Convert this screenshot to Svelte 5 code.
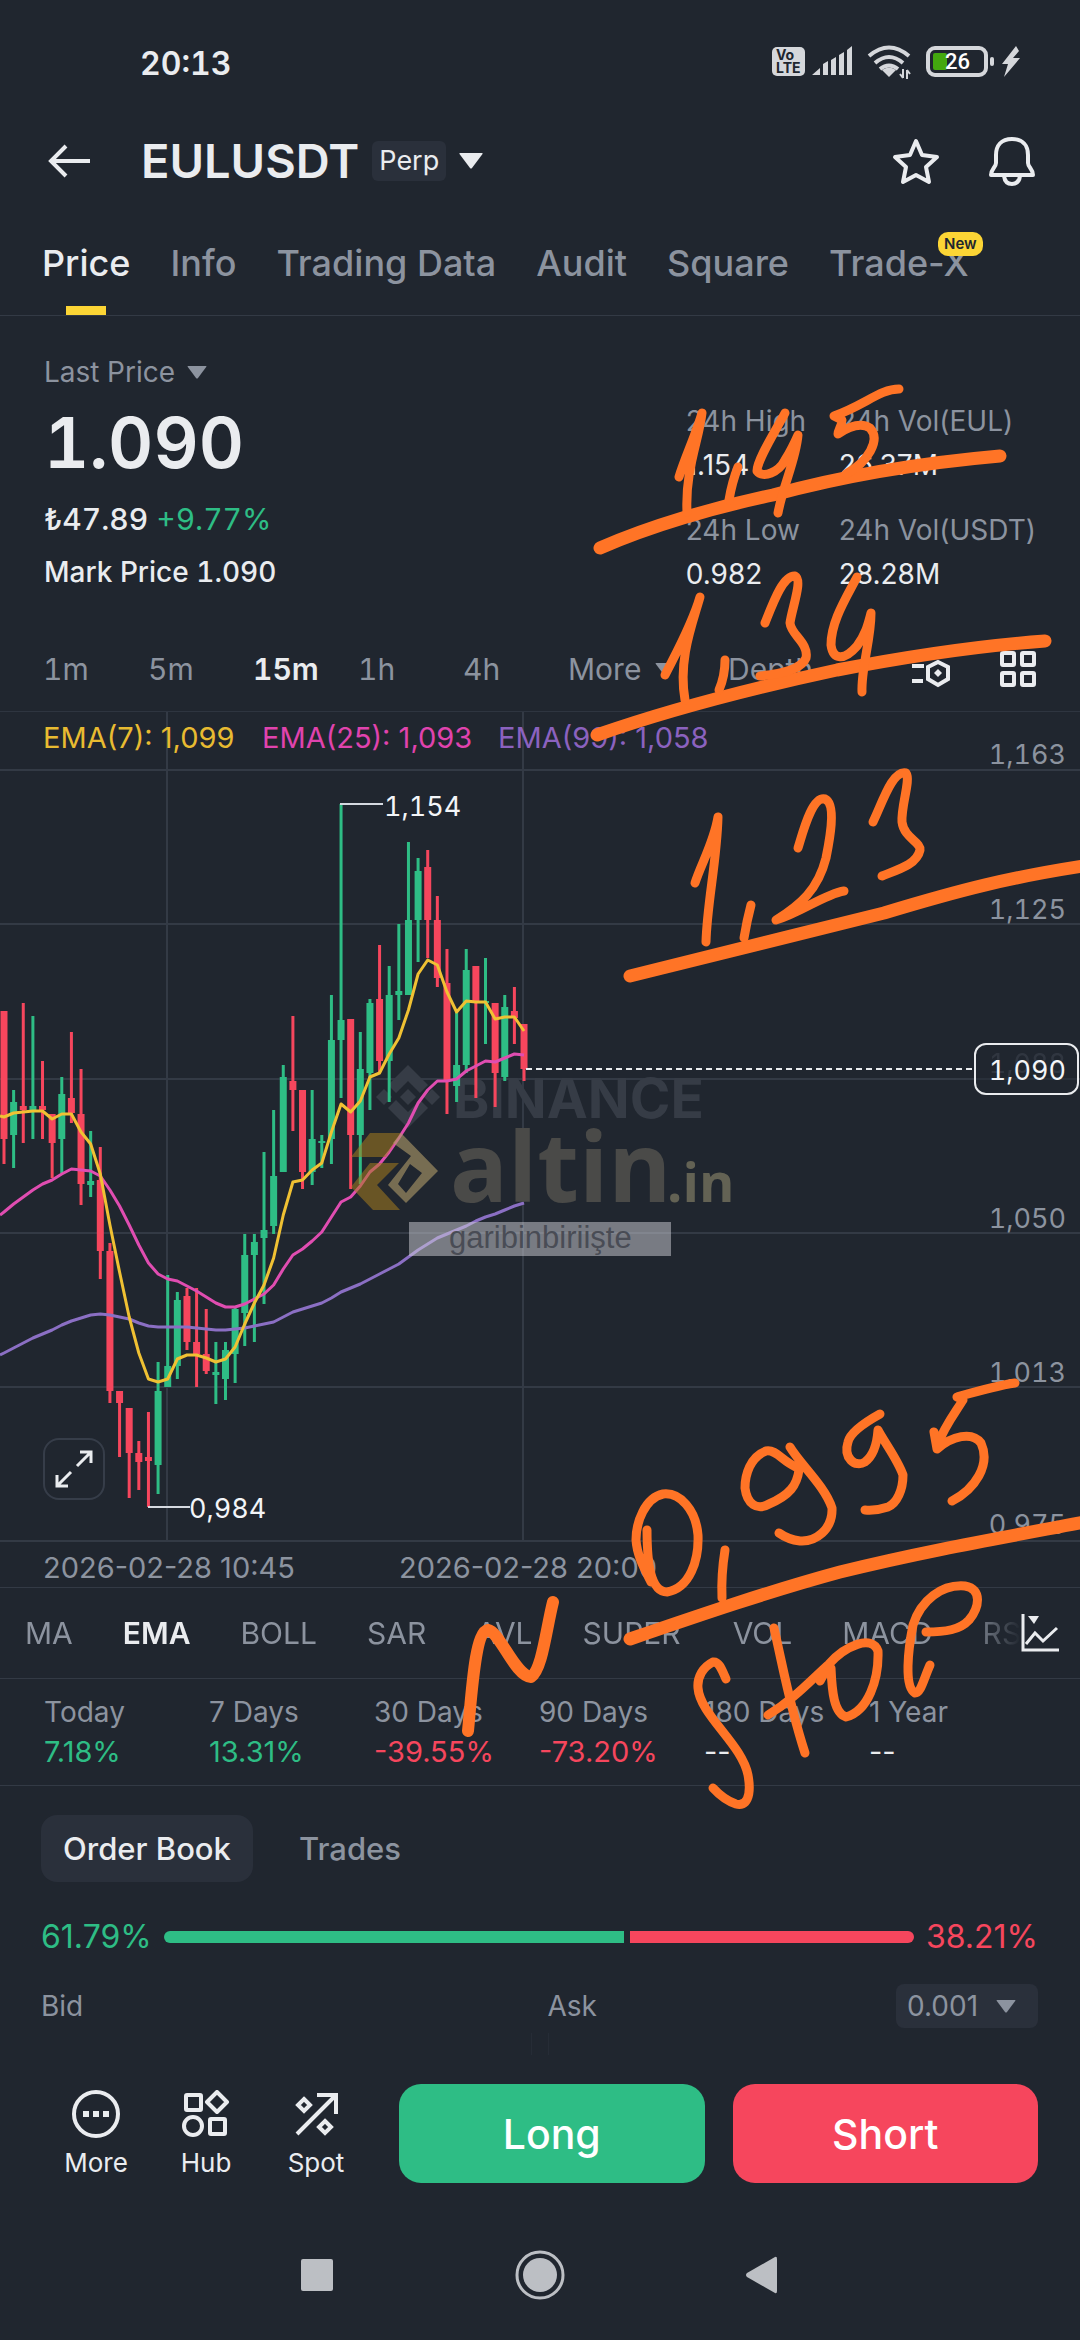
<script lang="ts">
	const tabs = ['Price', 'Info', 'Trading Data', 'Audit', 'Square', 'Trade-X'];
	const intervals = ['1m', '5m', '15m', '1h', '4h'];
	const overlays = ['MA', 'EMA', 'BOLL', 'SAR', 'AVL', 'SUPER'];
	const oscillators = ['VOL', 'MACD', 'RSI'];

	const stats = [
		{ label: '24h High', value: '1.154' },
		{ label: '24h Vol(EUL)', value: '26.37M' },
		{ label: '24h Low', value: '0.982' },
		{ label: '24h Vol(USDT)', value: '28.28M' }
	];

	const performance = [
		{ label: 'Today', value: '7.18%', tone: 'up' },
		{ label: '7 Days', value: '13.31%', tone: 'up' },
		{ label: '30 Days', value: '-39.55%', tone: 'down' },
		{ label: '90 Days', value: '-73.20%', tone: 'down' },
		{ label: '180 Days', value: '--', tone: '' },
		{ label: '1 Year', value: '--', tone: '' }
	];

	let activeTab = $state('Price');
	let activeInterval = $state('15m');
	let activeIndicator = $state('EMA');
	let activeBook = $state('Order Book');

	const bid = 61.79;
	const ask = 38.21;

	// chart geometry, in viewBox units
	const START = 4;
	const STEP = 9.63;
	const x = (i: number) => START + i * STEP;

	const rows = [770, 924, 1079, 1233, 1387, 1541];
	const axis = [
		{ y: 764, text: '1,163' },
		{ y: 919, text: '1,125' },
		{ y: 1228, text: '1,050' },
		{ y: 1382, text: '1,013' },
		{ y: 1534, text: '0,975' }
	];

	// [up, high, body top, body bottom, low]
	const candles = [
		[0, 1011, 1011, 1139, 1164], [1, 1090, 1102, 1135, 1168], [0, 1003, 1106, 1110, 1143],
		[1, 1016, 1106, 1112, 1139], [0, 1061, 1106, 1110, 1139], [0, 1114, 1114, 1143, 1178],
		[1, 1077, 1094, 1139, 1173], [0, 1032, 1098, 1113, 1123], [0, 1069, 1114, 1184, 1205],
		[1, 1131, 1181, 1185, 1197], [0, 1147, 1180, 1251, 1279], [0, 1243, 1251, 1391, 1403],
		[0, 1391, 1391, 1403, 1457], [0, 1408, 1408, 1453, 1498], [0, 1441, 1453, 1462, 1490],
		[0, 1412, 1457, 1461, 1507], [1, 1362, 1391, 1465, 1494], [1, 1275, 1366, 1387, 1387],
		[1, 1292, 1300, 1366, 1379], [0, 1288, 1296, 1342, 1350], [0, 1288, 1342, 1354, 1387],
		[0, 1309, 1354, 1371, 1374], [1, 1342, 1372, 1375, 1404], [1, 1342, 1350, 1379, 1400],
		[1, 1307, 1309, 1354, 1383], [1, 1234, 1255, 1313, 1346], [1, 1234, 1242, 1255, 1342],
		[1, 1152, 1230, 1238, 1304], [1, 1110, 1176, 1226, 1234], [1, 1065, 1077, 1172, 1172],
		[0, 1016, 1081, 1090, 1131], [0, 1090, 1090, 1172, 1189], [1, 1090, 1139, 1172, 1185],
		[1, 1135, 1141, 1143, 1168], [1, 995, 1040, 1139, 1164], [1, 804, 1020, 1040, 1098],
		[0, 1019, 1019, 1135, 1189], [1, 1032, 1069, 1135, 1184], [1, 999, 1003, 1073, 1110],
		[0, 945, 999, 1061, 1073], [1, 966, 995, 1061, 1102], [1, 924, 991, 995, 1020],
		[1, 842, 920, 995, 995], [1, 858, 871, 920, 962], [0, 850, 867, 920, 958],
		[0, 896, 920, 978, 987], [0, 949, 983, 1081, 1114], [1, 1011, 1065, 1086, 1102],
		[1, 949, 970, 1065, 1073], [0, 966, 966, 1003, 1098], [1, 958, 1001, 1003, 1044],
		[0, 1003, 1003, 1073, 1107], [1, 995, 1007, 1077, 1081], [0, 987, 1011, 1018, 1044],
		[0, 1024, 1024, 1069, 1081]
	];

	const ema7 = [
		1117, 1113, 1112, 1111, 1111, 1119, 1114, 1114, 1132, 1144, 1174, 1225, 1272, 1317, 1353, 1379,
		1382, 1379, 1359, 1355, 1355, 1358, 1362, 1359, 1347, 1324, 1303, 1285, 1258, 1215, 1182, 1180,
		1170, 1163, 1132, 1104, 1112, 1101, 1077, 1073, 1054, 1038, 1010, 974, 960, 965, 992, 1012,
		1001, 1002, 1002, 1019, 1017, 1017, 1031
	];
	const ema25 = [
		1212, 1204, 1197, 1190, 1184, 1180, 1174, 1169, 1170, 1171, 1176, 1190, 1206, 1225, 1245, 1263,
		1274, 1279, 1281, 1286, 1291, 1297, 1303, 1307, 1307, 1304, 1299, 1294, 1285, 1269, 1255, 1249,
		1241, 1232, 1217, 1202, 1197, 1186, 1172, 1164, 1152, 1138, 1123, 1103, 1090, 1081, 1081, 1079,
		1071, 1066, 1061, 1062, 1058, 1054, 1055
	];
	const ema99 = [
		1353, 1348, 1343, 1338, 1334, 1330, 1325, 1321, 1318, 1315, 1314, 1315, 1317, 1319, 1323, 1326,
		1327, 1327, 1327, 1327, 1328, 1329, 1330, 1330, 1329, 1328, 1326, 1324, 1322, 1317, 1312, 1309,
		1306, 1303, 1298, 1292, 1288, 1284, 1279, 1274, 1269, 1264, 1257, 1250, 1244, 1238, 1234, 1230,
		1226, 1221, 1217, 1214, 1210, 1206, 1203
	];

	const line = (values: number[], start: number) =>
		`0,${start} ` + values.map((y, i) => `${x(i)},${y}`).join(' ');
</script>

{#snippet caret(size: string)}
	<svg class="caret {size}" viewBox="0 0 24 16" aria-hidden="true">
		<path d="M1 0h22q1 0 .5 1L13 15q-1 1-2 0L.5 1Q0 0 1 0z" fill="currentColor" />
	</svg>
{/snippet}

<div class="screen">
	<div class="status-bar">
		<span class="clock">20:13</span>
		<svg class="status-icons" viewBox="0 0 250 36" aria-hidden="true">
			<rect x="0" y="2" width="33" height="29" rx="5" fill="#d5d7db" />
			<text x="4" y="15" class="volte">Vo</text>
			<text x="4" y="28" class="volte">LTE</text>
			<g fill="#d5d7db">
				<path d="M40 30l8-7v7zM51 19l5-3v14h-5zM59 15l5-3v18h-5zM67 10l5-3v23h-5zM75 5l5-4v29h-5z" />
				<path d="M110 25q7-5 14 0l-7 7z" />
			</g>
			<g fill="none" stroke="#d5d7db" stroke-width="4">
				<path d="M97 11q20-17 40 0" />
				<path d="M103 18q14-12 28 0" />
				<path d="M108 24q9-7 18 0" />
			</g>
			<path d="M131 24v9M131 33l-3-4M135 34v-9M135 25l3 4" stroke="#d5d7db" stroke-width="2" fill="none" />
			<rect x="156" y="3" width="58" height="27" rx="7" fill="none" stroke="#d5d7db" stroke-width="4" />
			<rect x="161" y="8" width="14" height="17" rx="2" fill="#43a80f" />
			<text x="173" y="24" class="charge">26</text>
			<rect x="218" y="12" width="4" height="9" rx="2" fill="#d5d7db" />
			<path d="M244 1l-14 18h6l-4 13 16-19h-7l6-7z" fill="#d5d7db" />
		</svg>
	</div>

	<header class="title-bar">
		<button class="icon-button" aria-label="Back">
			<svg width="44" height="36" viewBox="0 0 44 36" fill="none" stroke="currentColor" stroke-width="4">
				<path d="M19 3L4 18l15 15M4 18h39" />
			</svg>
		</button>
		<button class="pair">
			<h1>EULUSDT</h1>
			<span class="perp">Perp</span>
			{@render caret('large')}
		</button>
		<button class="icon-button star" aria-label="Add to favorites">
			<svg width="48" height="48" viewBox="0 0 48 48" fill="none" stroke="currentColor" stroke-width="4" stroke-linejoin="round">
				<path d="M24 4l6 14 15 2-11 10 3 15-13-7-13 7 3-15L3 20l15-2z" />
			</svg>
		</button>
		<button class="icon-button" aria-label="Price alerts">
			<svg width="48" height="50" viewBox="0 0 48 50" fill="none" stroke="currentColor" stroke-width="4" stroke-linejoin="round">
				<path d="M24 3C13 3 8 10 8 19v8c0 4-5 6-5 12h42c0-6-5-8-5-12v-8C40 10 35 3 24 3z" />
				<path d="M16 40q1 8 8 8t8-8" />
			</svg>
		</button>
	</header>

	<nav class="tabs">
		{#each tabs as tab}
			<button class:active={activeTab === tab} onclick={() => (activeTab = tab)}>
				{tab}
				{#if tab === 'Trade-X'}
					<span class="new-badge">New</span>
				{/if}
			</button>
		{/each}
	</nav>

	<section class="summary">
		<div class="price-block">
			<button class="last-price">Last Price {@render caret('small')}</button>
			<strong>1.090</strong>
			<div class="fiat">₺47.89 <span class="up">+9.77%</span></div>
			<div class="mark">Mark Price <span>1.090</span></div>
		</div>
		<dl class="stats">
			{#each stats as stat}
				<div>
					<dt>{stat.label}</dt>
					<dd>{stat.value}</dd>
				</div>
			{/each}
		</dl>
	</section>

	<div class="intervals">
		{#each intervals as interval}
			<button class:active={activeInterval === interval} onclick={() => (activeInterval = interval)}>
				{interval}
			</button>
		{/each}
		<button class="more">More {@render caret('small')}</button>
		<button class="depth">Depth</button>
		<button class="icon-button" aria-label="Chart settings">
			<svg width="40" height="38" viewBox="0 0 40 38" fill="none" stroke="currentColor" stroke-width="4">
				<path d="M1 16h12M1 31h11" />
				<path d="M27 12l10 5v12l-10 6-10-6V17z" />
				<path d="M27 19l4 4-4 4-4-4z" fill="currentColor" stroke="none" />
			</svg>
		</button>
		<button class="icon-button layout" aria-label="Chart layout">
			<svg width="38" height="38" viewBox="0 0 38 38" fill="none" stroke="currentColor" stroke-width="4">
				<rect x="3" y="3" width="12" height="12" rx="1" />
				<rect x="23" y="3" width="12" height="12" rx="1" />
				<rect x="3" y="23" width="12" height="12" rx="1" />
				<rect x="23" y="23" width="12" height="12" rx="1" />
			</svg>
		</button>
	</div>

	<section class="chart">
		<svg viewBox="0 712 1080 875" role="img" aria-label="EULUSDT 15 minute candles">
			<g class="grid">
				{#each rows as y}
					<line x1="0" x2="1080" y1={y} y2={y} />
				{/each}
				<line x1="167" x2="167" y1="712" y2="1541" />
				<line x1="523" x2="523" y1="712" y2="1541" />
			</g>

			<g class="brand">
				<path d="M408 1065l20 20-8 8-12-12-12 12-8-8zM408 1128l20-20-8-8-12 12-12-12-8 8zM384 1089l8 8-8 8-8-8zM408 1089l8 8-8 8-8-8zM432 1089l8 8-8 8-8-8z" />
				<text x="453" y="1118">BINANCE</text>
			</g>

			{#each candles as [up, high, top, bottom, low], i}
				<g class={up ? 'candle-up' : 'candle-down'}>
					<rect x={x(i) - 1.5} y={high} width="3" height={low - high} />
					<rect x={x(i) - 3.5} y={top} width="7" height={bottom - top} />
				</g>
			{/each}

			<polyline class="ema ema99" points={line(ema99, 1355)} />
			<polyline class="ema ema25" points={line(ema25, 1215)} />
			<polyline class="ema ema7" points={line(ema7, 1116)} />

			<text x="43" y="748" class="legend ema7-text">EMA(7): 1,099</text>
			<text x="262" y="748" class="legend ema25-text">EMA(25): 1,093</text>
			<text x="498" y="748" class="legend ema99-text">EMA(99): 1,058</text>

			<path class="leader" d="M340 804h43M148 1507h42" />
			<text x="384" y="816" class="label bright">1,154</text>
			<text x="189" y="1518" class="label bright">0,984</text>

			{#each axis as tick}
				<text x="1066" y={tick.y} class="label muted" text-anchor="end">{tick.text}</text>
			{/each}

			<line class="last-line" x1="526" x2="975" y1="1069" y2="1069" />
			<text x="1066" y="1073" class="label muted faint" text-anchor="end">1,088</text>
			<rect class="last-box" x="975" y="1044" width="103" height="50" rx="11" />
			<text x="1066" y="1080" class="label bright" text-anchor="end">1,090</text>

			<text x="43" y="1578" class="legend muted">2026-02-28 10:45</text>
			<text x="399" y="1578" class="legend muted">2026-02-28 20:00</text>

			<g class="stamp">
				<path d="M370 1133h31l-15 24h-35zM370 1163h29l-22 22 23 25h-27l-22-23z" fill="#a67c1e" opacity=".55" />
				<path d="M401 1133l37 38-32 32-18-18 23-29-18-13zM410 1164l-12 20 8 9 16-20z" fill="#b39c6a" fill-rule="evenodd" opacity=".6" />
				<text x="450" y="1202" class="stamp-name">altin</text>
				<text x="667" y="1202" class="stamp-tld">.in</text>
				<rect x="409" y="1222" width="262" height="34" fill="#d0d0d8" opacity=".5" />
				<text x="449" y="1248" class="stamp-user">garibinbiriişte</text>
			</g>
		</svg>
		<button class="expand" aria-label="Full screen">
			<svg width="38" height="38" viewBox="0 0 38 38" fill="none" stroke="currentColor" stroke-width="3">
				<path d="M22 16L35 3M25 2h11v11M16 22L3 35M2 25v11h11" />
			</svg>
		</button>
	</section>

	<div class="indicators">
		<div class="indicator-list">
			{#each overlays as name}
				<button class:active={activeIndicator === name} onclick={() => (activeIndicator = name)}>{name}</button>
			{/each}
			<span class="divider"></span>
			{#each oscillators as name}
				<button class:active={activeIndicator === name} onclick={() => (activeIndicator = name)}>{name}</button>
			{/each}
		</div>
		<button class="icon-button" aria-label="Indicator settings">
			<svg width="38" height="38" viewBox="0 0 38 38" fill="none" stroke="currentColor" stroke-width="3">
				<path d="M2 0v36h36" />
				<path d="M5 30l9-11 8 8 14-13" />
				<path d="M7 2h11l-5 8z" fill="currentColor" stroke="none" />
			</svg>
		</button>
	</div>

	<dl class="performance">
		{#each performance as item}
			<div>
				<dt>{item.label}</dt>
				<dd class={item.tone}>{item.value}</dd>
			</div>
		{/each}
	</dl>

	<section class="book">
		<div class="book-tabs">
			{#each ['Order Book', 'Trades'] as name}
				<button class:active={activeBook === name} onclick={() => (activeBook = name)}>{name}</button>
			{/each}
		</div>
		<div class="ratio">
			<span class="up">{bid}%</span>
			<div class="ratio-bar">
				<div class="ratio-bid" style="flex-grow: {bid}"></div>
				<div class="ratio-ask" style="flex-grow: {ask}"></div>
			</div>
			<span class="down">{ask}%</span>
		</div>
		<div class="book-head">
			<span>Bid</span>
			<div class="ask-head">
				<span>Ask</span>
				<div class="precision">
					<select aria-label="Price precision">
						<option>0.001</option>
						<option>0.01</option>
					</select>
					{@render caret('small')}
				</div>
			</div>
		</div>
		<div class="book-peek"></div>
	</section>

	<footer class="actions">
		<div class="shortcuts">
			<button>
				<svg width="48" height="48" viewBox="0 0 48 48" fill="none" stroke="currentColor" stroke-width="4">
					<circle cx="24" cy="24" r="22" />
					<path d="M11 24h6M21 24h6M31 24h6" stroke-width="6" />
				</svg>
				More
			</button>
			<button>
				<svg width="48" height="48" viewBox="0 0 48 48" fill="none" stroke="currentColor" stroke-width="4" stroke-linejoin="round">
					<rect x="4" y="5" width="15" height="15" rx="1" />
					<path d="M35 2l10 10-10 10-10-10z" />
					<circle cx="11" cy="36" r="9" />
					<rect x="28" y="29" width="15" height="15" rx="1" />
				</svg>
				Hub
			</button>
			<button>
				<svg width="48" height="48" viewBox="0 0 48 48" fill="none" stroke="currentColor" stroke-width="4">
					<path d="M5 44L43 6M25 5h19v19" />
					<path d="M12 9l6 6-6 6-6-6zM33 31l6 6-6 6-6-6z" />
				</svg>
				Spot
			</button>
		</div>
		<button class="trade long">Long</button>
		<button class="trade short">Short</button>
	</footer>

	<nav class="system-nav">
		<button aria-label="Recent apps">
			<svg width="48" height="48" viewBox="0 0 48 48"><rect x="8" y="8" width="32" height="32" rx="2" fill="#bcbfc4" /></svg>
		</button>
		<button aria-label="Home">
			<svg width="50" height="50" viewBox="0 0 50 50">
				<circle cx="25" cy="25" r="23" fill="none" stroke="#bcbfc4" stroke-width="3" />
				<circle cx="25" cy="25" r="17" fill="#bcbfc4" />
			</svg>
		</button>
		<button aria-label="Go back">
			<svg width="48" height="48" viewBox="0 0 48 48"><path d="M8 22L36 6q2-1 2 2v32q0 3-2 2L8 26q-2-2 0-4z" fill="#bcbfc4" /></svg>
		</button>
	</nav>

	<!-- hand-drawn price targets -->
	<svg class="markup" viewBox="0 0 1080 2340" aria-hidden="true">
		<g class="level">
			<path d="M600 548C650 526 715 507 773 495C850 474 920 463 1000 456" />
			<path d="M597 735C660 713 730 693 837 670C910 656 975 646 1045 641" />
			<path d="M630 976C700 958 800 934 884 913C960 890 1010 877 1090 865" />
			<path d="M630 1639C700 1615 770 1591 840 1572C920 1552 1000 1538 1090 1521" />
		</g>
		<g class="digits">
			<path d="M679 477C684 460 696 434 702 413C699 440 685 470 687 512" />
			<path d="M738 467Q732 482 729 500" />
			<path d="M785 413C775 432 757 460 757 471C763 479 779 472 785 460C790 452 794 444 798 435C796 460 783 485 778 513" />
			<path d="M899 389C880 389 865 405 834 416L842 420C842 426 838 430 838 434C850 426 862 423 870 428C881 440 868 462 846 474" />
			<path d="M665 675C675 655 692 625 700 597C692 625 678 660 685 700" />
			<path d="M725 660Q725 676 719 690" />
			<path d="M765 623C773 603 783 575 795 576C803 580 792 608 790 623C791 635 809 643 806 658C802 668 784 674 760 676" />
			<path d="M857 577C845 600 831 622 831 645C833 660 844 661 857 646C866 634 868 624 871 613C871 640 861 668 862 692" />
			<path d="M695 883C701 864 714 842 718 817C717 860 707 904 706 942" />
			<path d="M751 905Q747 920 744 938" />
			<path d="M798 848C803 832 812 796 825 799C837 804 829 843 826 858C818 890 800 905 776 920C800 913 825 894 844 891" />
			<path d="M873 822C882 804 892 770 906 773C911 780 901 805 902 822C904 838 921 842 920 850C917 864 900 869 882 876" />
			<path d="M647 1530C647 1560 650 1592 667 1592C690 1588 699 1560 698 1535C696 1510 680 1492 663 1494C645 1498 636 1522 636 1540C637 1556 645 1570 651 1582" />
			<path d="M725 1550Q721 1575 722 1598" />
			<path d="M796 1467C782 1461 776 1449 766 1451C750 1457 745 1475 745 1488C747 1504 757 1511 769 1504C790 1495 797 1485 799 1470M790 1447C800 1464 825 1486 832 1508C833 1530 815 1542 800 1541C792 1540 786 1538 779 1533" />
			<path d="M880 1414C862 1424 850 1433 848 1442C843 1458 855 1468 865 1462C873 1456 877 1444 878 1430C883 1440 898 1460 903 1475C903 1490 897 1503 888 1507Q876 1511 865 1510" />
			<path d="M1015 1383C995 1386 978 1391 957 1397L963 1400C955 1413 945 1425 937 1446L934 1432L937 1449C952 1436 972 1431 981 1443C991 1465 975 1489 952 1501" />
			<path d="M726 1679C722 1670 719 1661 713 1662C703 1667 697 1677 698 1688C700 1715 742 1744 748 1775C752 1797 746 1807 736 1804Q724 1800 713 1788" />
			<path d="M774 1628C784 1672 790 1707 805 1753" />
			<path d="M768 1715C794 1699 810 1681 829 1664C845 1646 872 1634 878 1651C879 1680 868 1711 846 1717C834 1713 832 1692 831 1668M827 1668L820 1681" />
			<path d="M930 1665C924 1678 921 1693 915 1693C904 1687 908 1650 913 1625C921 1600 942 1584 965 1586C983 1589 979 1608 969 1620C960 1630 945 1632 926 1632" />
		</g>
		<path class="note" d="M468 1731C472 1690 475 1632 488 1630C500 1632 515 1676 531 1677C542 1670 546 1630 553 1602" />
	</svg>
</div>

<style>
	:global(body) {
		background: #20262f;
	}

	.screen {
		position: relative;
		overflow: hidden;
		background: #20262f;
		color: #eaecef;
		font-family: Inter, 'Liberation Sans', sans-serif;
		font-size: 28px;
	}

	button,
	select {
		margin: 0;
		padding: 0;
		border: 0;
		background: none;
		color: inherit;
		font: inherit;
		white-space: nowrap;
	}

	svg {
		display: block;
	}

	dl,
	dd,
	h1 {
		margin: 0;
	}

	.clock,
	.price-block,
	.intervals button,
	.label {
		font-variant-numeric: tabular-nums;
	}

	.up {
		color: #2ebd85;
	}

	.down {
		color: #f6465d;
	}

	.caret {
		flex: none;
	}

	.caret.large {
		width: 24px;
		height: 16px;
	}

	.caret.small {
		width: 20px;
		height: 13px;
	}

	.icon-button {
		flex: none;
	}

	.status-bar {
		display: flex;
		align-items: center;
		justify-content: space-between;
		height: 126px;
		padding: 0 58px 0 140px;
	}

	.clock {
		font-size: 32px;
		font-weight: 600;
	}

	.status-icons {
		width: 250px;
		height: 36px;
	}

	.volte {
		font-size: 14px;
		font-weight: 700;
		fill: #20262f;
	}

	.charge {
		font-family: Roboto, sans-serif;
		font-size: 22px;
		font-weight: 500;
		fill: #fff;
	}

	.title-bar {
		display: flex;
		align-items: center;
		height: 70px;
		padding: 0 44px 0 47px;
	}

	.pair {
		display: flex;
		align-items: center;
		gap: 13px;
		margin-left: 50px;
	}

	h1 {
		font-size: 47px;
		font-weight: 600;
		line-height: 56px;
	}

	.perp {
		padding: 0 7px;
		border-radius: 6px;
		background: #2a303b;
		font-size: 27px;
		line-height: 40px;
	}

	.star {
		margin: 0 48px 0 auto;
	}

	.tabs {
		display: flex;
		gap: 40px;
		height: 119px;
		padding: 0 42px;
		border-bottom: 1px solid #333a45;
		color: #8c939f;
	}

	.tabs button {
		position: relative;
		padding-bottom: 30px;
		padding-top: 45px;
		font-size: 36px;
		font-weight: 500;
		line-height: 44px;
	}

	.tabs .active {
		color: #eaecef;
	}

	.tabs .active::after {
		content: '';
		position: absolute;
		bottom: 0;
		left: 50%;
		width: 40px;
		height: 9px;
		margin-left: -20px;
		background: #fcd535;
	}

	.new-badge {
		position: absolute;
		top: 36px;
		right: -14px;
		padding: 0 6px;
		border-radius: 10px;
		background: #fcd535;
		color: #20262f;
		font-size: 15px;
		font-weight: 600;
		line-height: 24px;
	}

	.summary {
		display: flex;
		align-items: flex-end;
		justify-content: space-between;
		padding: 40px 44px 31px;
	}

	.last-price {
		display: flex;
		align-items: center;
		gap: 12px;
		color: #8c939f;
		line-height: 32px;
	}

	.price-block strong {
		display: block;
		font-size: 70px;
		font-weight: 600;
		line-height: 110px;
	}

	.fiat {
		font-size: 30px;
		font-weight: 500;
		line-height: 42px;
	}

	.fiat .up {
		font-weight: 400;
	}

	.mark {
		margin-top: 8px;
		font-weight: 500;
		line-height: 48px;
	}

	.stats {
		display: grid;
		grid-template-columns: 153px auto;
		row-gap: 21px;
		line-height: 44px;
		white-space: nowrap;
	}

	dt {
		color: #8c939f;
	}

	.intervals {
		display: flex;
		align-items: center;
		height: 84px;
		padding: 0 43px;
		border-bottom: 1px solid #2e3540;
		color: #8c939f;
		font-size: 30px;
	}

	.intervals > button:not(.icon-button) {
		width: 105px;
		text-align: left;
	}

	.intervals > .more:not(.icon-button) {
		display: flex;
		align-items: center;
		gap: 14px;
		width: 160px;
	}

	.intervals .active {
		color: #eaecef;
		font-weight: 600;
	}

	.intervals .icon-button {
		margin-left: auto;
		color: #eaecef;
	}

	.intervals .layout {
		margin-left: 48px;
	}

	.chart {
		position: relative;
		border-bottom: 1px solid #333a45;
	}

	.chart > svg {
		width: 100%;
		height: auto;
	}

	.grid line {
		stroke: #333a45;
		stroke-width: 2;
	}

	.brand {
		fill: #363c46;
	}

	.brand text {
		font-size: 55px;
		font-weight: 700;
	}

	.candle-up {
		fill: #2ebd85;
	}

	.candle-down {
		fill: #f6465d;
	}

	.ema {
		fill: none;
		stroke-width: 3;
		stroke-linejoin: round;
	}

	.ema7 {
		stroke: #f0c133;
	}

	.ema25 {
		stroke: #e04db1;
	}

	.ema99 {
		stroke: #8b6fc4;
	}

	.label {
		font-size: 27px;
	}

	.legend {
		font-size: 29px;
	}

	.ema7-text {
		fill: #e8bb31;
	}

	.ema25-text {
		fill: #e043ae;
	}

	.ema99-text {
		fill: #8b62bf;
	}

	.muted {
		fill: #8c939f;
	}

	.bright {
		fill: #f3f5f8;
	}

	.faint {
		opacity: 0.3;
	}

	.leader {
		fill: none;
		stroke: #d5d9e0;
		stroke-width: 2;
	}

	.last-line {
		stroke: #eaecef;
		stroke-width: 2;
		stroke-dasharray: 6 4;
	}

	.last-box {
		fill: #20262f;
		fill-opacity: 0.5;
		stroke: #eaecef;
		stroke-width: 2;
	}

	.stamp-name,
	.stamp-tld {
		font-family: 'Open Sans', 'Noto Sans', sans-serif;
		font-weight: 700;
	}

	.stamp-name {
		font-size: 96px;
		fill: #4a4a48;
	}

	.stamp-tld {
		font-size: 54px;
		fill: #636254;
	}

	.stamp-user {
		font-family: 'Liberation Sans', sans-serif;
		font-size: 31px;
		fill: #494c55;
	}

	.expand {
		position: absolute;
		bottom: 87px;
		left: 43px;
		display: grid;
		place-items: center;
		width: 62px;
		height: 62px;
		border: 2px solid #363d49;
		border-radius: 16px;
		background: #20262f;
	}

	.indicators {
		display: flex;
		align-items: center;
		height: 90px;
		padding-right: 21px;
		border-bottom: 1px solid #333a45;
	}

	.indicator-list {
		display: flex;
		flex: 1;
		gap: 50px;
		min-width: 0;
		overflow: hidden;
		padding-left: 25px;
		color: #8c939f;
		font-size: 30px;
		mask-image: linear-gradient(to right, #000 95%, transparent 100%);
	}

	.indicator-list .active {
		color: #eaecef;
		font-weight: 600;
	}

	.divider {
		width: 1px;
		margin: 6px -24px;
		background: #333a45;
	}

	.performance {
		display: grid;
		grid-template-columns: repeat(6, 1fr);
		padding: 13px 46px 13px 44px;
		border-bottom: 1px solid #333a45;
		line-height: 40px;
	}

	.performance dd {
		font-size: 29px;
	}

	.book {
		padding: 29px 42px 0 41px;
	}

	.book-tabs {
		display: flex;
		gap: 24px;
		font-size: 31px;
	}

	.book-tabs button {
		padding: 0 22px;
		border-radius: 16px;
		color: #8c939f;
		font-weight: 500;
		line-height: 67px;
	}

	.book-tabs .active {
		background: #2a303b;
		color: #eaecef;
	}

	.ratio {
		display: flex;
		align-items: center;
		gap: 12px;
		margin-top: 37px;
		font-size: 32px;
		line-height: 36px;
	}

	.ratio-bar {
		display: flex;
		flex: 1;
		gap: 6px;
		height: 12px;
	}

	.ratio-bid {
		border-radius: 6px 0 0 6px;
		background: #2ebd85;
	}

	.ratio-ask {
		border-radius: 0 6px 6px 0;
		background: #f6465d;
	}

	.book-head {
		display: grid;
		grid-template-columns: 1fr 1fr;
		gap: 16px;
		align-items: center;
		margin-top: 29px;
		color: #8c939f;
	}

	.ask-head {
		display: flex;
		align-items: center;
		justify-content: space-between;
	}

	.precision {
		position: relative;
		display: flex;
		align-items: center;
		width: 142px;
		height: 44px;
		border-radius: 8px;
		background: #2a303b;
	}

	.precision select {
		width: 100%;
		height: 100%;
		padding-left: 11px;
		appearance: none;
	}

	.precision .caret {
		position: absolute;
		right: 22px;
		pointer-events: none;
	}

	.book-peek {
		width: 16px;
		height: 22px;
		margin: 5px auto 0;
		border: solid #262c36;
		border-width: 0 1px;
	}

	.actions {
		display: flex;
		gap: 28px;
		padding: 29px 42px 0 41px;
	}

	.shortcuts {
		display: flex;
		align-items: center;
	}

	.shortcuts button {
		display: flex;
		flex-direction: column;
		align-items: center;
		gap: 10px;
		width: 110px;
		font-size: 26px;
		line-height: 30px;
	}

	.trade {
		flex: 1;
		height: 99px;
		border-radius: 22px;
		color: #fff;
		font-size: 41px;
		font-weight: 500;
	}

	.long {
		background: #2ebd85;
	}

	.short {
		background: #f6465d;
	}

	.system-nav {
		display: flex;
		align-items: center;
		justify-content: center;
		gap: 174px;
		height: 130px;
		margin-top: 27px;
	}

	.markup {
		position: absolute;
		top: 0;
		left: 0;
		width: 100%;
		pointer-events: none;
	}

	.markup path {
		fill: none;
		stroke: #ff7426;
		stroke-linecap: round;
		stroke-linejoin: round;
	}

	.digits path {
		stroke-width: 9;
	}

	.level path {
		stroke-width: 13;
	}

	.markup .note {
		stroke-width: 12;
	}
</style>
